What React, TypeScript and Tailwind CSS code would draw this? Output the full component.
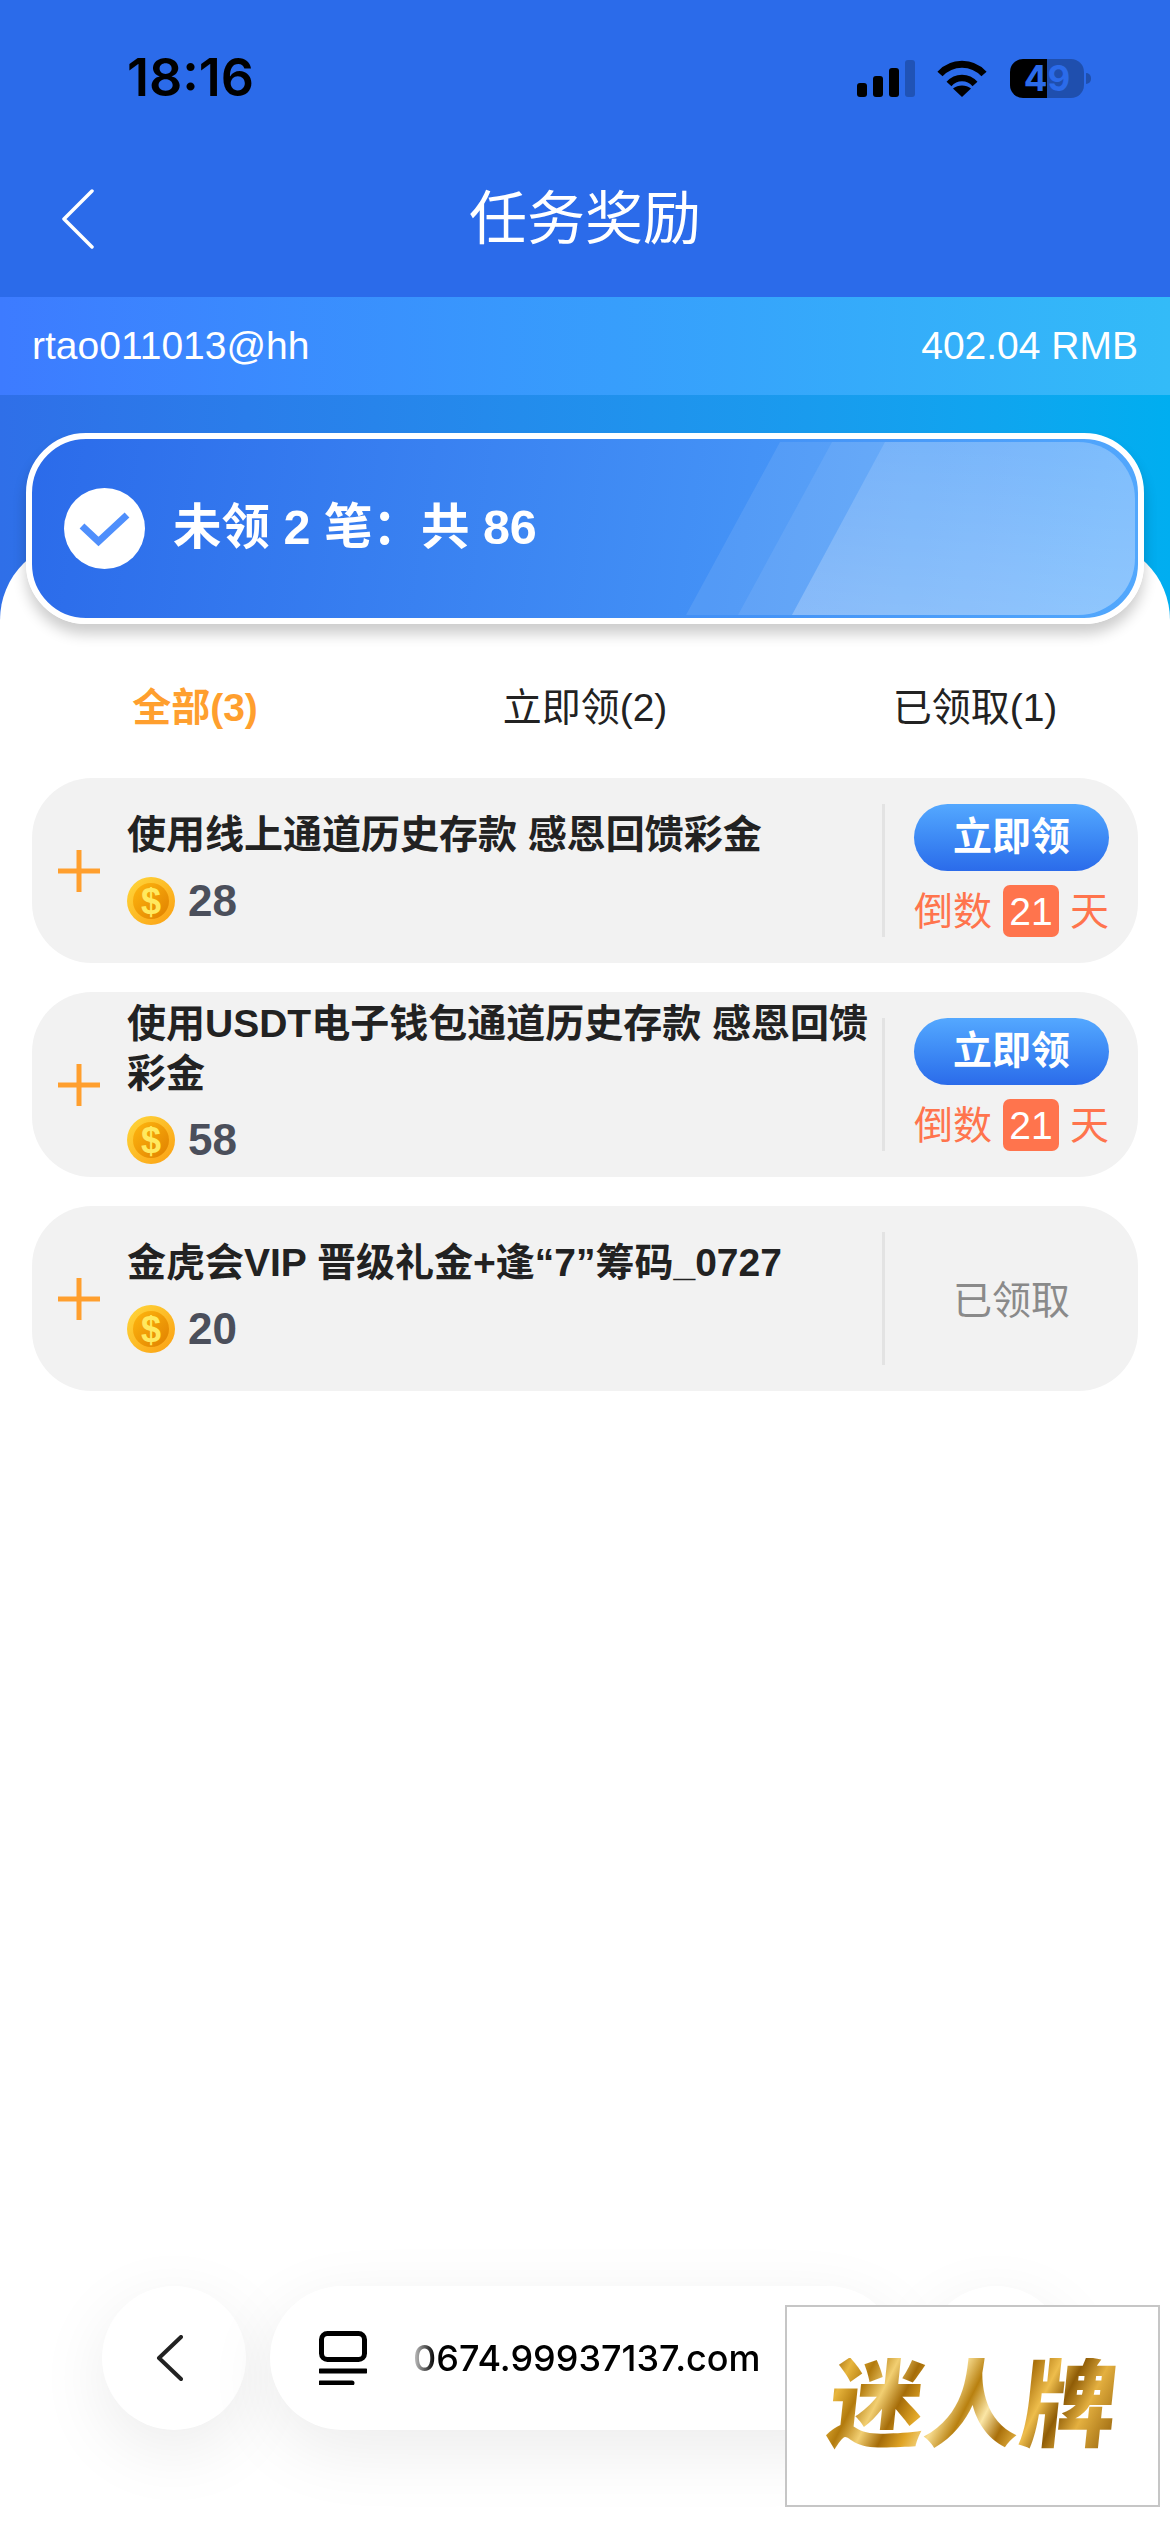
const sans = "font-['Liberation_Sans','Noto_Sans_CJK_SC',sans-serif]";

function Coin() {
  return (
    <svg width="48" height="48" viewBox="0 0 48 48" className="shrink-0">
      <defs>
        <linearGradient id="coinOuter" x1="0" y1="0" x2="1" y2="1">
          <stop offset="0" stopColor="#ffd83c" />
          <stop offset="1" stopColor="#fb9f12" />
        </linearGradient>
        <linearGradient id="coinInner" x1="0" y1="0" x2="1" y2="1">
          <stop offset="0" stopColor="#ffb70f" />
          <stop offset="1" stopColor="#e08000" />
        </linearGradient>
      </defs>
      <circle cx="24" cy="24" r="24" fill="url(#coinOuter)" />
      <circle cx="24" cy="24" r="18" fill="url(#coinInner)" />
      <text x="24" y="37" textAnchor="middle" fontFamily="Liberation Sans" fontWeight="700" fontSize="36" fill="#ffe95f">$</text>
    </svg>
  );
}

function Plus() {
  return (
    <svg width="42" height="42" viewBox="0 0 42 42" className="shrink-0">
      <path d="M0 21H42M21 0V42" stroke="#ff9f2e" strokeWidth="5" fill="none" />
    </svg>
  );
}

function Row({ title, amount, done }: { title: string; amount: string; done?: boolean }) {
  return (
    <div className="flex h-[185px] items-center rounded-[60px] bg-[#f2f2f2] pl-[26px]">
      <Plus />
      <div className="ml-[27px] w-[755px] shrink-0">
        <div className="text-[39px] font-bold leading-[50px] text-[#222222]">{title}</div>
        <div className="mt-[11px] flex h-[60px] items-center gap-[13px]">
          <Coin />
          <span className="text-[44px] font-bold text-[#4b4f5b]">{amount}</span>
        </div>
      </div>
      <div className="flex h-[133px] flex-1 flex-col items-center justify-center border-l-[3px] border-[#e3e3e3]">
        {done ? (
          <span className="mt-[5px] text-[39px] text-[#8a8a8a]">已领取</span>
        ) : (
          <>
            <div className="flex h-[72px] w-[195px] items-center justify-center rounded-[36px] bg-linear-to-b from-[#54a8ff] to-[#2b6bea] text-[39px] font-bold text-white">立即领</div>
            <div className="mt-[14px] flex h-[52px] w-[195px] items-center justify-between text-[39px] leading-none text-[#ff744d]">
              <span>倒数</span>
              <span className="flex h-[52px] w-[56px] items-center justify-center rounded-[7px] bg-[#ff744d] text-white">21</span>
              <span>天</span>
            </div>
          </>
        )}
      </div>
    </div>
  );
}

function StatusIcons() {
  return (
    <div className="flex items-center">
      <svg width="58" height="37" viewBox="0 0 58 37">
        <rect x="0" y="23" width="10" height="14" rx="3" fill="#000" />
        <rect x="16" y="16" width="10" height="21" rx="3" fill="#000" />
        <rect x="32" y="8" width="10" height="29" rx="3" fill="#000" />
        <rect x="48" y="0" width="10" height="37" rx="3" fill="#2053b6" />
      </svg>
      <svg width="50" height="37" viewBox="0 0 50 37" className="ml-[22px]">
        <path d="M3 14C15 1 35 1 47 14" stroke="#000" strokeWidth="7" fill="none" />
        <path d="M12 24C19 16 31 16 38 24" stroke="#000" strokeWidth="6.5" fill="none" />
        <path d="M25 37L16 28.5C21 24.5 29 24.500 34 28.500Z" fill="#000" />
      </svg>
      <div className="ml-[23px] flex h-[39px] w-[74px] items-center justify-center rounded-[13px] bg-[linear-gradient(90deg,#000_50%,#1f4fae_50%)] font-['Inter',sans-serif] text-[35px] font-bold leading-none text-[#2b6bea]">49</div>
      <div className="ml-[2px] h-[11px] w-[5px] rounded-r-full bg-[#1f4fae]" />
    </div>
  );
}

export default function App() {
  return (
    <div className={`relative flex h-[2532px] w-[1170px] flex-col overflow-hidden bg-white ${sans}`}>
      <header className="h-[297px] shrink-0 bg-[#2b6bea]">
        <div className="flex h-[156px] items-center justify-between pl-[127px] pr-[79px]">
          <span className="font-['Inter',sans-serif] text-[52px] font-semibold leading-none text-black">18:16</span>
          <StatusIcons />
        </div>
        <div className="relative flex h-[126px] items-center justify-center">
          <svg width="34" height="60" viewBox="0 0 34 60" className="absolute left-[61px] top-[33px]">
            <path d="M31 2L3 30L31 58" stroke="#fff" strokeWidth="3.5" strokeLinecap="round" strokeLinejoin="round" fill="none" />
          </svg>
          <span className="text-[58px] leading-none text-white">任务奖励</span>
        </div>
      </header>

      <div className="flex h-[98px] shrink-0 items-center justify-between bg-linear-to-r from-[#3d7bff] to-[#33bbf8] px-[32px] text-[39px] text-white">
        <span>rtao011013@hh</span>
        <span>402.04 RMB</span>
      </div>

      <div className="flex flex-1 flex-col bg-linear-to-r from-[#2f6fe8] to-[#00aef0] pt-[38px]">
        <div className="relative z-10 mx-[26px] h-[191px] shrink-0 rounded-[60px] border-[6px] border-white bg-[linear-gradient(98deg,#2b6bea,#52a8fd)] shadow-[0_10px_14px_rgba(0,0,0,0.2)]">
          <svg className="absolute inset-0 h-full w-full" viewBox="0 0 1106 179" preserveAspectRatio="none">
            <defs>
              <clipPath id="bannerClip">
                <path d="M60 3H1046A57 57 0 0 1 1103 60V119A57 57 0 0 1 1046 176H60Z" />
              </clipPath>
              <linearGradient id="bannerShine" x1="0" y1="0" x2="0" y2="1">
                <stop offset="0" stopColor="#fff" stopOpacity="0.12" />
                <stop offset="1" stopColor="#fff" stopOpacity="0.24" />
              </linearGradient>
            </defs>
            <g clipPath="url(#bannerClip)">
              <polygon points="748,3 1106,3 1106,176 654,176" fill="#fff" fillOpacity="0.09" />
              <polygon points="800,3 1106,3 1106,176 706,176" fill="#fff" fillOpacity="0.08" />
              <polygon points="853,3 1106,3 1106,176 760,176" fill="url(#bannerShine)" />
            </g>
          </svg>
          <div className="relative flex h-full items-center pl-[32px]">
            <svg width="81" height="81" viewBox="0 0 81 81" className="shrink-0">
              <circle cx="40.500" cy="40.500" r="40.500" fill="#fff" />
              <path d="M18 38L34.500 53.500L63 27" stroke="#4f8ffc" strokeWidth="7" fill="none" />
            </svg>
            <span className="ml-[28px] -mt-[2px] text-[48.500px] font-bold leading-none text-white">未领 2 笔：共 86</span>
          </div>
        </div>

        <main className="-mt-[84px] flex flex-1 flex-col rounded-t-[80px] bg-white px-[32px] pt-[136px]">
          <nav className="-mx-[32px] grid grid-cols-3 text-center text-[39px] leading-[64px] text-[#222222]">
            <span className="font-bold text-[#ff9f2e]">全部(3)</span>
            <span>立即领(2)</span>
            <span>已领取(1)</span>
          </nav>
          <div className="mt-[38px] flex flex-col gap-[29px]">
            <Row title="使用线上通道历史存款 感恩回馈彩金" amount="28" />
            <Row title="使用USDT电子钱包通道历史存款 感恩回馈彩金" amount="58" />
            <Row title="金虎会VIP 晋级礼金+逢“7”筹码_0727" amount="20" done />
          </div>
        </main>
      </div>

      <div className="absolute left-[102px] top-[2286px] flex gap-[24px]">
        <div className="flex h-[144px] w-[144px] items-center justify-center rounded-full bg-white shadow-[0_20px_70px_rgba(0,0,0,0.08)]">
          <svg width="27" height="46" viewBox="0 0 27 46" className="mr-[9px]">
            <path d="M25 2L3 23L25 44" stroke="#222" strokeWidth="4" strokeLinecap="round" strokeLinejoin="round" fill="none" />
          </svg>
        </div>
        <div className="flex h-[144px] w-[630px] items-center rounded-full bg-white pl-[49px] shadow-[0_20px_70px_rgba(0,0,0,0.08)]">
          <svg width="48" height="54" viewBox="0 0 48 54" className="shrink-0">
            <rect x="2.500" y="2.500" width="43" height="26" rx="6" stroke="#000" strokeWidth="5" fill="none" />
            <path d="M1 40H47M1 52H33" stroke="#000" strokeWidth="5" strokeLinecap="round" fill="none" />
          </svg>
          <span className="ml-[46px] font-['Inter',sans-serif] text-[36px] font-medium leading-none text-black [mask-image:linear-gradient(90deg,rgba(0,0,0,0.2),#000_22px)]">0674.99937137.com</span>
        </div>
        <div className="h-[144px] w-[144px] rounded-full bg-white shadow-[0_20px_70px_rgba(0,0,0,0.08)]" />
      </div>

      <div className="absolute left-[785px] top-[2305px] flex h-[202px] w-[375px] items-center justify-center border-2 border-[#c6c6c6] bg-white">
        <span className="-skew-x-6 bg-[linear-gradient(112deg,#9a6408_0%,#e8b63e_6%,#b27a0d_13%,#f2cf72_20%,#a56c08_27%,#e0a526_34%,#f7dc8f_41%,#b8800f_48%,#fbe6a6_55%,#a96f0a_62%,#eebd4c_70%,#8f5c06_77%,#e4b040_85%,#8f5c06_100%)] bg-clip-text text-[96px] font-black leading-none text-transparent">迷人牌</span>
      </div>
    </div>
  );
}
